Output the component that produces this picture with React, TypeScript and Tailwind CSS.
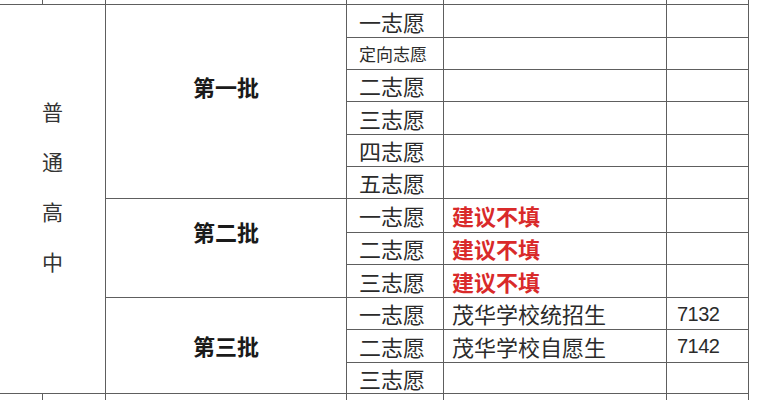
const CJK = { fontFamily: '"Noto Sans CJK SC", "Noto Sans", sans-serif' };

type Row = { pick: string; small?: boolean; school?: string; red?: boolean; code?: string };

const batch1: Row[] = [
  { pick: "一志愿" },
  { pick: "定向志愿", small: true },
  { pick: "二志愿" },
  { pick: "三志愿" },
  { pick: "四志愿" },
  { pick: "五志愿" },
];

const batch2: Row[] = [
  { pick: "一志愿", school: "建议不填", red: true },
  { pick: "二志愿", school: "建议不填", red: true },
  { pick: "三志愿", school: "建议不填", red: true },
];

const batch3: Row[] = [
  { pick: "一志愿", school: "茂华学校统招生", code: "7132" },
  { pick: "二志愿", school: "茂华学校自愿生", code: "7142" },
  { pick: "三志愿" },
];

function Cells({ r }: { r: Row }) {
  return (
    <>
      <div
        className={`bg-white flex items-center pl-[12px] pb-[1px] text-[#2b2b2b] ${
          r.small ? "text-[17px]" : "text-[22px]"
        }`}
      >
        {r.pick}
      </div>
      <div
        className={`bg-white flex items-center pl-[8px] pb-[1px] text-[22px] ${
          r.red ? "text-[#d92a2a] font-bold" : "text-[#2b2b2b]"
        }`}
      >
        {r.school}
      </div>
      <div
        className="bg-white flex items-center pl-[10px] text-[20px] text-[#2b2b2b] tracking-[-0.5px]"
        style={{ fontFamily: '"Liberation Sans", Arial, sans-serif' }}
      >
        {r.code}
      </div>
    </>
  );
}

function Blank() {
  return <div className="bg-white" />;
}

export default function App() {
  return (
    <div className="w-[759px] h-[400px] overflow-hidden bg-white" style={CJK}>
      <div className="grid w-[749px] gap-px bg-[#5e5e5e] border-r border-[#5e5e5e] grid-cols-[42px_62px_240px_96px_222px_81px] grid-rows-[4px_32px_31px_31px_32px_31px_31px_33px_31px_32px_31px_32px_30px_30px] leading-none">
        {/* previous section, bottom edge */}
        <Blank />
        <Blank />
        <Blank />
        <Blank />
        <Blank />
        <Blank />

        {/* 普通高中 */}
        <div className="bg-white col-start-1 col-end-3 row-start-2 row-end-14 flex flex-col items-center pt-[81px] text-[21px] leading-[50px] text-[#333]">
          <span>普</span>
          <span>通</span>
          <span>高</span>
          <span>中</span>
        </div>

        <div className="bg-white col-start-3 row-start-2 row-end-8 flex justify-center pt-[65px] text-[22px] leading-[32px] font-bold text-[#1a1a1a]">
          第一批
        </div>
        <div className="bg-white col-start-3 row-start-8 row-end-11 flex justify-center pt-[16px] text-[22px] leading-[32px] font-bold text-[#1a1a1a]">
          第二批
        </div>
        <div className="bg-white col-start-3 row-start-11 row-end-14 flex items-center justify-center pb-[2px] text-[22px] font-bold text-[#1a1a1a]">
          第三批
        </div>

        {[...batch1, ...batch2, ...batch3].map((r, i) => (
          <Cells key={i} r={r} />
        ))}

        {/* next section, only its top edge is in view */}
        <Blank />
        <div className="bg-white flex justify-center pt-[4px] text-[22px] font-bold text-[#1a1a1a]">第</div>
        <div className="bg-white flex justify-center pt-[6px] text-[22px] font-bold text-[#1a1a1a]">第一批</div>
        <Blank />
        <Blank />
        <Blank />
      </div>
    </div>
  );
}
